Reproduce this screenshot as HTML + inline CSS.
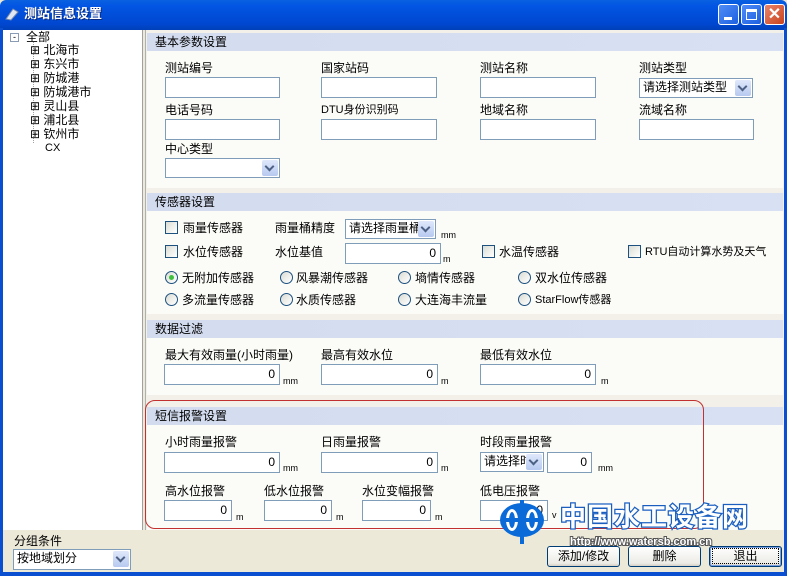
<!DOCTYPE html>
<html><head><meta charset="utf-8"><style>
*{margin:0;padding:0;box-sizing:border-box}
body{width:787px;height:576px;overflow:hidden;position:relative;background:#ece9d8;font-family:"Liberation Sans","Noto Sans CJK SC",sans-serif;font-size:12px;color:#000}
.a{position:absolute;white-space:nowrap;line-height:14px}
.title{left:0;top:0;width:787px;height:30px;background:linear-gradient(#0a61e0,#0255e3 20%,#0047d0 80%,#0040b8);border-radius:6px 6px 0 0}
.frame{position:absolute;background:#0a4fd0}
.inp{position:absolute;background:#fff;border:1px solid #7f9db9;text-align:right;padding-right:4px;line-height:18px}
.sel{position:absolute;background:#fff;border:1px solid #7f9db9;padding-left:3px;line-height:17px;overflow:hidden;white-space:nowrap}
.sel i{position:absolute;right:1px;top:1px;width:16px;height:16px;background:linear-gradient(#dfe8fb,#b7c9f0);border-radius:2px}
.sel i:after{content:"";position:absolute;left:4px;top:3px;width:5px;height:5px;border-right:2px solid #4d6185;border-bottom:2px solid #4d6185;transform:rotate(45deg)}
.hd{position:absolute;left:147px;width:636px;height:18px;background:linear-gradient(90deg,#d3dcef,#d8e1f4);padding-left:8px;line-height:18px}
.bd{position:absolute;left:147px;width:636px;background:#fbfbf8}
.cb{position:absolute;width:13px;height:13px;border:1px solid #1c5180;background:linear-gradient(135deg,#dcdcd5,#fff)}
.rb{position:absolute;width:13px;height:13px;border:1px solid #1c5180;border-radius:50%;background:linear-gradient(135deg,#dcdcd5,#fff)}
.u{position:absolute;font-size:9px;line-height:10px}
.btn{position:absolute;height:21px;width:73px;border:1px solid #003c74;border-radius:3px;background:linear-gradient(#fff,#ecebe6 85%,#d6d0c5);text-align:center;line-height:19px}
.tb{position:absolute;top:4px;width:21px;height:21px;border:1px solid #fff;border-radius:3px;background:linear-gradient(135deg,#4f8cf7,#1d5fe0)}
</style></head><body>
<div class="a title"></div>
<svg class="a" style="left:4px;top:6px" width="16" height="16"><path d="M2 13 L9 3 L14 6 L7 14 Z" fill="#dfe7f3" stroke="#7a8cad"/></svg>
<div class="a" style="left:24px;top:7px;color:#fff;font-weight:bold;font-size:13px;text-shadow:1px 1px #0a2a80">测站信息设置</div>
<div class="tb" style="left:718px"><div style="position:absolute;left:5px;top:12px;width:8px;height:3px;background:#fff"></div></div>
<div class="tb" style="left:741px"><div style="position:absolute;left:4px;top:4px;width:11px;height:11px;border:1px solid #fff;border-top-width:3px"></div></div>
<div class="tb" style="left:764px;background:linear-gradient(135deg,#e9846a,#c9431c)"><div style="position:absolute;left:0;top:0;width:19px;height:19px;color:#fff;font-weight:bold;font-size:16px;text-align:center;line-height:19px">✕</div></div>
<div class="frame" style="left:0;top:28px;width:3px;height:548px"></div>
<div class="frame" style="left:784px;top:28px;width:3px;height:548px"></div>
<div class="frame" style="left:0;top:572px;width:787px;height:4px"></div>

<div class="a" style="left:3px;top:30px;width:140px;height:500px;background:#fff;border-right:1px solid #a0a0a0"></div>
<div class="a" style="left:10px;top:33px;width:9px;height:9px;border:1px solid #8a9bb4;font-size:9px;line-height:7px;text-align:center">-</div>
<div class="a" style="left:26px;top:30px">全部</div>
<div class="a" style="left:33px;top:42px;width:1px;height:101px;border-left:1px dotted #a0a0a0"></div>
<div class="a" style="left:30px;top:43px;line-height:14px">
<div>⊞ 北海市</div><div>⊞ 东兴市</div><div>⊞ 防城港</div><div>⊞ 防城港市</div><div>⊞ 灵山县</div><div>⊞ 浦北县</div><div>⊞ 钦州市</div><div style="padding-left:15px;font-size:11px">CX</div></div>

<div class="a" style="left:145px;top:30px;width:639px;height:500px;background:#f2f0e8;border-left:1px solid #b0b0b0"></div>
<div class="hd" style="top:33px">基本参数设置</div>
<div class="bd" style="top:51px;height:137px"></div>
<div class="a" style="left:165px;top:61px">测站编号</div>
<div class="a" style="left:321px;top:61px">国家站码</div>
<div class="a" style="left:480px;top:61px">测站名称</div>
<div class="a" style="left:639px;top:61px">测站类型</div>
<div class="inp" style="left:165px;top:77px;width:115px;height:21px"></div>
<div class="inp" style="left:321px;top:77px;width:116px;height:21px"></div>
<div class="inp" style="left:480px;top:77px;width:116px;height:21px"></div>
<div class="sel" style="left:639px;top:78px;width:114px;height:20px">请选择测站类型<i></i></div>
<div class="a" style="left:165px;top:103px">电话号码</div>
<div class="a" style="left:321px;top:103px;font-size:11px">DTU身份识别码</div>
<div class="a" style="left:480px;top:103px">地域名称</div>
<div class="a" style="left:639px;top:103px">流域名称</div>
<div class="inp" style="left:165px;top:119px;width:115px;height:21px"></div>
<div class="inp" style="left:321px;top:119px;width:116px;height:21px"></div>
<div class="inp" style="left:480px;top:119px;width:116px;height:21px"></div>
<div class="inp" style="left:639px;top:119px;width:115px;height:21px"></div>
<div class="a" style="left:165px;top:142px">中心类型</div>
<div class="sel" style="left:165px;top:158px;width:115px;height:20px"><i></i></div>

<div class="hd" style="top:193px">传感器设置</div>
<div class="bd" style="top:211px;height:103px"></div>
<div class="cb" style="left:165px;top:221px"></div><div class="a" style="left:183px;top:221px">雨量传感器</div>
<div class="a" style="left:275px;top:221px">雨量桶精度</div>
<div class="sel" style="left:345px;top:219px;width:91px;height:20px">请选择雨量桶<i></i></div>
<div class="u" style="left:441px;top:230px">mm</div>
<div class="cb" style="left:165px;top:245px"></div><div class="a" style="left:183px;top:245px">水位传感器</div>
<div class="a" style="left:275px;top:245px">水位基值</div>
<div class="inp" style="left:345px;top:243px;width:96px;height:21px">0</div>
<div class="u" style="left:443px;top:254px">m</div>
<div class="cb" style="left:482px;top:245px"></div><div class="a" style="left:499px;top:245px">水温传感器</div>
<div class="cb" style="left:628px;top:245px"></div><div class="a" style="left:645px;top:245px;font-size:11px">RTU自动计算水势及天气</div>
<div class="rb" style="left:165px;top:271px"><div style="position:absolute;left:3px;top:3px;width:5px;height:5px;border-radius:50%;background:#3ec03e"></div></div><div class="a" style="left:182px;top:271px">无附加传感器</div>
<div class="rb" style="left:280px;top:271px"></div><div class="a" style="left:296px;top:271px">风暴潮传感器</div>
<div class="rb" style="left:398px;top:271px"></div><div class="a" style="left:415px;top:271px">墒情传感器</div>
<div class="rb" style="left:518px;top:271px"></div><div class="a" style="left:535px;top:271px">双水位传感器</div>
<div class="rb" style="left:165px;top:293px"></div><div class="a" style="left:182px;top:293px">多流量传感器</div>
<div class="rb" style="left:280px;top:293px"></div><div class="a" style="left:296px;top:293px">水质传感器</div>
<div class="rb" style="left:398px;top:293px"></div><div class="a" style="left:415px;top:293px">大连海丰流量</div>
<div class="rb" style="left:518px;top:293px"></div><div class="a" style="left:535px;top:293px;font-size:11px">StarFlow传感器</div>

<div class="hd" style="top:320px">数据过滤</div>
<div class="bd" style="top:338px;height:57px"></div>
<div class="a" style="left:165px;top:348px">最大有效雨量(小时雨量)</div>
<div class="a" style="left:321px;top:348px">最高有效水位</div>
<div class="a" style="left:480px;top:348px">最低有效水位</div>
<div class="inp" style="left:164px;top:364px;width:116px;height:21px">0</div>
<div class="inp" style="left:321px;top:364px;width:117px;height:21px">0</div>
<div class="inp" style="left:480px;top:364px;width:116px;height:21px">0</div>
<div class="u" style="left:283px;top:376px">mm</div><div class="u" style="left:441px;top:376px">m</div><div class="u" style="left:601px;top:376px">m</div>

<div class="hd" style="top:407px">短信报警设置</div>
<div class="bd" style="top:425px;height:105px"></div>
<div class="a" style="left:165px;top:435px">小时雨量报警</div>
<div class="a" style="left:321px;top:435px">日雨量报警</div>
<div class="a" style="left:480px;top:435px">时段雨量报警</div>
<div class="inp" style="left:164px;top:452px;width:116px;height:21px">0</div>
<div class="inp" style="left:321px;top:452px;width:117px;height:21px">0</div>
<div class="sel" style="left:480px;top:452px;width:64px;height:20px">请选择时<i></i></div>
<div class="inp" style="left:547px;top:452px;width:45px;height:21px">0</div>
<div class="u" style="left:283px;top:463px">mm</div><div class="u" style="left:441px;top:463px">m</div><div class="u" style="left:598px;top:463px">mm</div>
<div class="a" style="left:165px;top:484px">高水位报警</div>
<div class="a" style="left:264px;top:484px">低水位报警</div>
<div class="a" style="left:362px;top:484px">水位变幅报警</div>
<div class="a" style="left:480px;top:484px">低电压报警</div>
<div class="inp" style="left:164px;top:500px;width:68px;height:21px">0</div>
<div class="inp" style="left:264px;top:500px;width:68px;height:21px">0</div>
<div class="inp" style="left:362px;top:500px;width:69px;height:21px">0</div>
<div class="inp" style="left:480px;top:500px;width:68px;height:21px">0</div>
<div class="u" style="left:236px;top:512px">m</div><div class="u" style="left:336px;top:512px">m</div><div class="u" style="left:435px;top:512px">m</div><div class="u" style="left:552px;top:510px">v</div>
<div class="a" style="left:145px;top:400px;width:559px;height:129px;border:1px solid #c23030;border-radius:10px"></div>

<svg class="a" style="left:498px;top:498px" width="50" height="48"><ellipse cx="24" cy="22" rx="22" ry="17" fill="#0a6ad8"/><ellipse cx="14" cy="22" rx="6" ry="11" fill="#fff"/><ellipse cx="34" cy="22" rx="6" ry="11" fill="#fff"/><ellipse cx="14" cy="22" rx="3" ry="8" fill="#0a6ad8"/><ellipse cx="34" cy="22" rx="3" ry="8" fill="#0a6ad8"/><rect x="22" y="2" width="4" height="44" fill="#0a6ad8"/><rect x="8" y="20" width="32" height="4" fill="#0a6ad8"/></svg>
<div class="a" style="left:560px;top:502px;font-size:26px;line-height:30px;font-weight:bold;color:#fff;-webkit-text-stroke:2.5px #1a5fc0;paint-order:stroke fill;letter-spacing:1px">中国水工设备网</div>
<div class="a" style="left:570px;top:535px;font-size:11px;font-weight:bold;color:#fff;-webkit-text-stroke:2px #555;paint-order:stroke fill">http://www.watersb.com.cn</div>

<div class="a" style="left:14px;top:534px">分组条件</div>
<div class="sel" style="left:13px;top:549px;width:118px;height:21px">按地域划分<i></i></div>
<div class="btn" style="left:547px;top:546px">添加/修改</div>
<div class="btn" style="left:628px;top:546px">删除</div>
<div class="btn" style="left:709px;top:546px;box-shadow:inset 0 0 0 1px #7a9fe0"><span style="border:1px dotted #000;padding:0 20px">退出</span></div>
</body></html>
